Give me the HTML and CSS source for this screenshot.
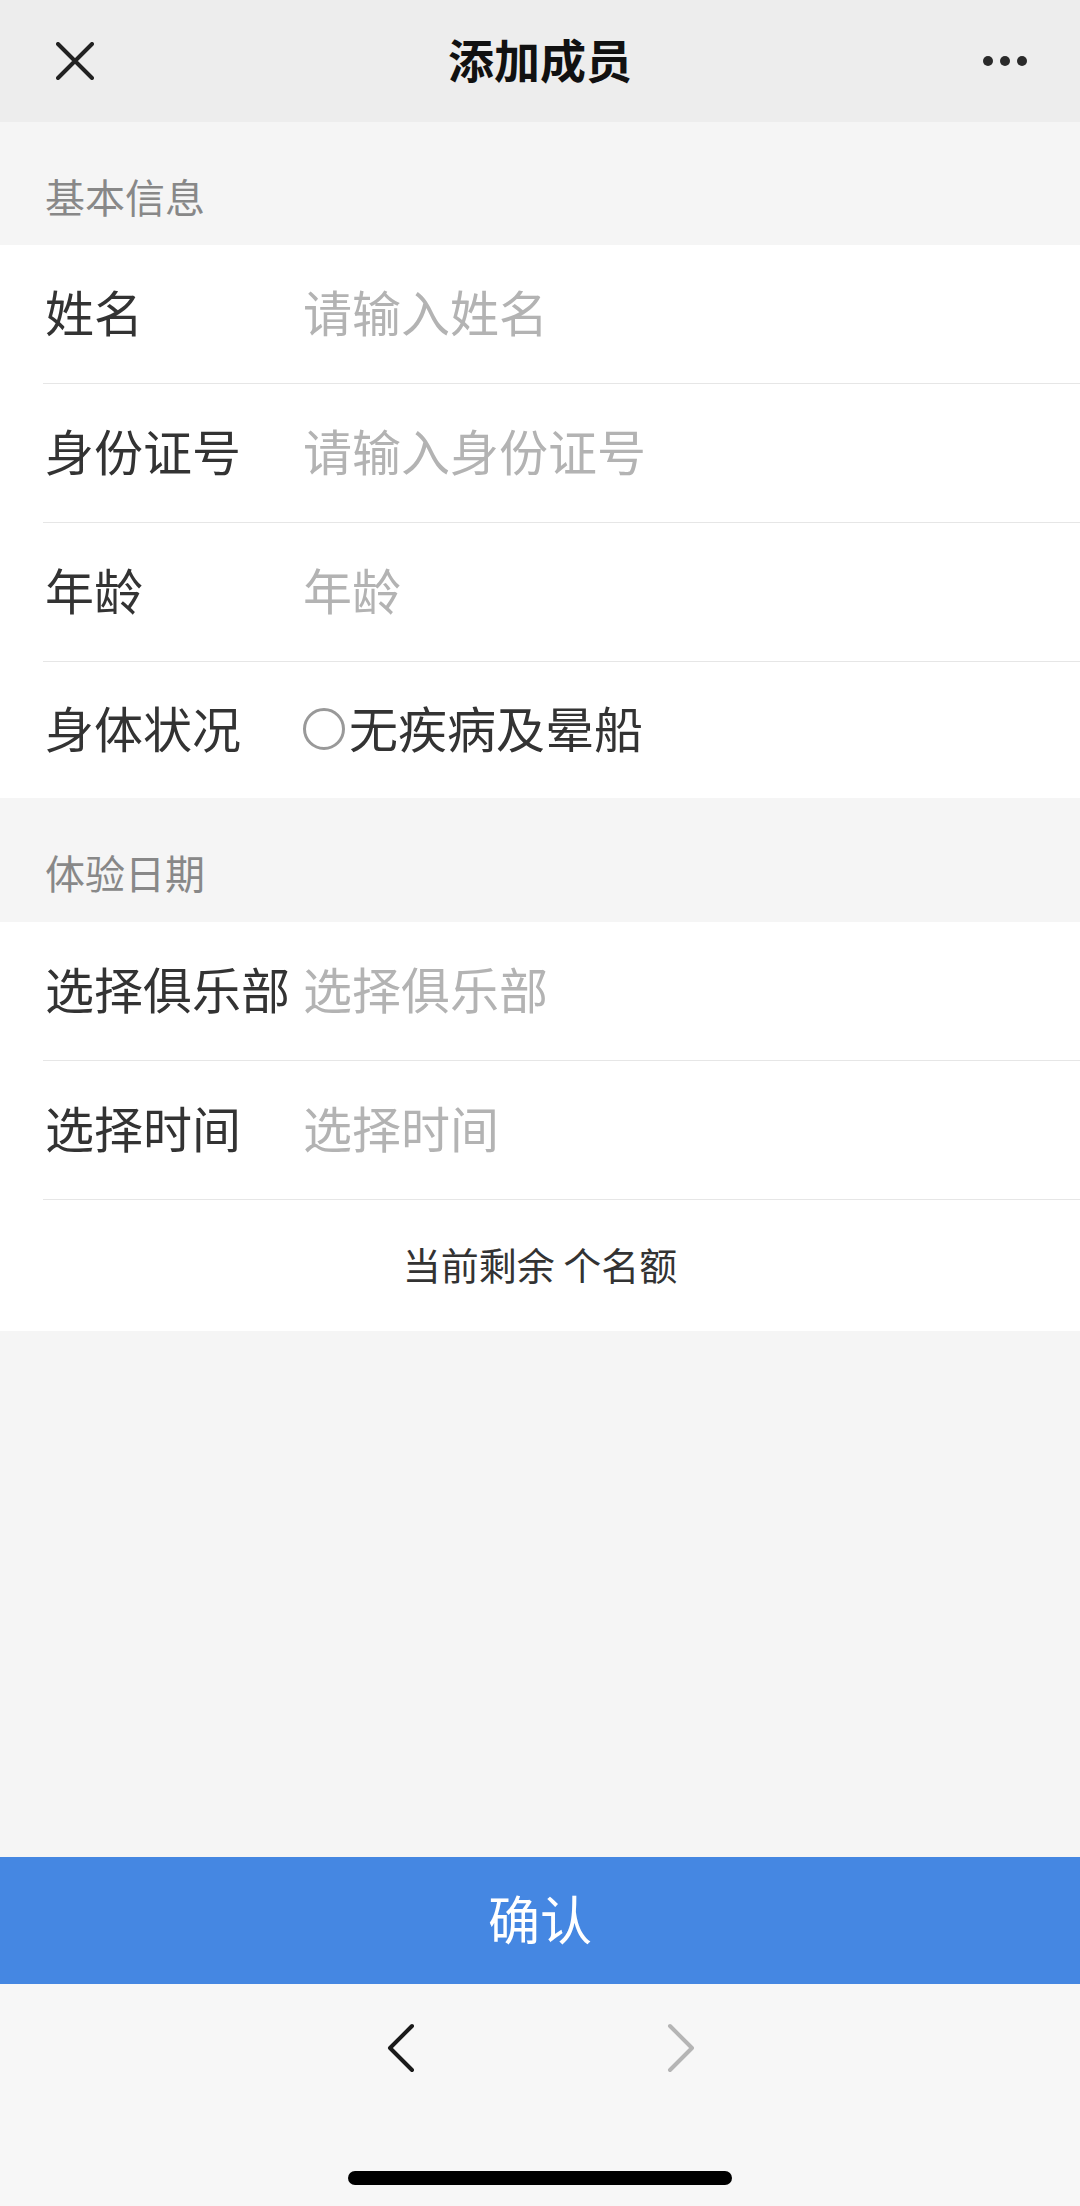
FILE: index.html
```html
<!DOCTYPE html>
<html lang="zh-CN">
  <head>
    <meta charset="utf-8" />
    <title>添加成员</title>
    <link rel="stylesheet" href="styles.css">
  </head>
<body>

<div class="page">

  <div class="nav">
    <div class="nav-left">
      <svg width="38" height="38" viewBox="0 0 38 38">
        <path d="M2 2 L36 36 M36 2 L2 36" stroke="#222" stroke-width="4" stroke-linecap="round" fill="none"/>
      </svg>
    </div>
    <div class="nav-title">添加成员</div>
    <div class="nav-right">
      <span class="dot"></span><span class="dot"></span><span class="dot"></span>
    </div>
  </div>

  <div class="main">
    <div class="group-title">基本信息</div>
    <div class="group">
      <div class="cell">
        <span class="label">姓名</span>
        <span class="value placeholder">请输入姓名</span>
      </div>
      <div class="cell">
        <span class="label">身份证号</span>
        <span class="value placeholder">请输入身份证号</span>
      </div>
      <div class="cell">
        <span class="label">年龄</span>
        <span class="value placeholder">年龄</span>
      </div>
      <div class="cell last">
        <span class="label">身体状况</span>
        <span class="value"><span class="radio"></span>无疾病及晕船</span>
      </div>
    </div>

    <div class="group-title second">体验日期</div>
    <div class="group">
      <div class="cell">
        <span class="label">选择俱乐部</span>
        <span class="value placeholder">选择俱乐部</span>
      </div>
      <div class="cell">
        <span class="label">选择时间</span>
        <span class="value placeholder">选择时间</span>
      </div>
      <div class="notice">当前剩余 个名额</div>
    </div>
  </div>

  <div class="confirm">确认</div>

  <div class="toolbar">
    <div class="arrows">
      <svg width="30" height="50" viewBox="0 0 30 50">
        <path d="M26 3 L4 25 L26 47" stroke="#1a1a1a" stroke-width="4" stroke-linecap="round" stroke-linejoin="round" fill="none"/>
      </svg>
      <svg width="30" height="50" viewBox="0 0 30 50">
        <path d="M4 3 L26 25 L4 47" stroke="#b5b5b5" stroke-width="4" stroke-linecap="round" stroke-linejoin="round" fill="none"/>
      </svg>
    </div>
    <div class="home-bar"></div>
  </div>

</div>

</body>
</html>
```

FILE: styles.css
```css
body {
    margin: 0;
    font-family: "Noto Sans CJK SC", "Noto Sans", sans-serif;
    background: #f5f5f5;
    color: #333;
}
.page {
    width: 1080px;
    height: 2206px;
    display: flex;
    flex-direction: column;
}

/* top bar */
.nav {
    height: 122px;
    background: #ededed;
    display: grid;
    grid-template-columns: 1fr auto 1fr;
    align-items: center;
}
.nav-left {
    padding-left: 56px;
    display: flex;
    align-items: center;
}
.nav-title {
    font-size: 46px;
    font-weight: bold;
    color: #111;
    line-height: 46px;
    padding-bottom: 6px;
}
.nav-right {
    display: flex;
    justify-content: flex-end;
    gap: 7px;
    padding-right: 53px;
}
.dot {
    width: 10px;
    height: 10px;
    border-radius: 50%;
    background: #2a2a2a;
}

/* form */
.main {
    flex: 1;
}
.group-title {
    height: 123px;
    box-sizing: border-box;
    padding: 54px 0 0 45px;
    font-size: 40px;
    line-height: 40px;
    color: #888;
}
.group-title.second {
    height: 124px;
}
.group {
    background: #fff;
}
.cell {
    margin-left: 43px;
    padding-left: 2px;
    padding-bottom: 8px;
    height: 139px;
    box-sizing: border-box;
    border-bottom: 1px solid #e6e6e6;
    display: flex;
    align-items: center;
    font-size: 49px;
}
.cell.last {
    height: 136px;
    border-bottom: none;
}
.label {
    width: 258px;
    flex: none;
    color: #333;
    white-space: nowrap;
}
.value {
    display: flex;
    align-items: center;
    color: #333;
}
.placeholder {
    color: #b3b3b3;
}
.radio {
    width: 36px;
    height: 36px;
    border: 3px solid #999;
    border-radius: 50%;
    margin-right: 4px;
    margin-top: 6px;
}
.notice {
    height: 131px;
    padding-bottom: 4px;
    box-sizing: border-box;
    display: flex;
    align-items: center;
    justify-content: center;
    font-size: 38px;
    color: #333;
}

/* bottom */
.confirm {
    height: 127px;
    padding-bottom: 6px;
    box-sizing: border-box;
    background: #4587e2;
    color: #fff;
    font-size: 52px;
    display: flex;
    align-items: center;
    justify-content: center;
}
.toolbar {
    height: 222px;
    background: #f7f7f7;
    display: flex;
    flex-direction: column;
    align-items: center;
}
.arrows {
    margin-top: 39px;
    display: flex;
    gap: 250px;
    margin-left: 2px;
}
.home-bar {
    margin-top: 98px;
    width: 384px;
    height: 14px;
    border-radius: 7px;
    background: #000;
}
```
